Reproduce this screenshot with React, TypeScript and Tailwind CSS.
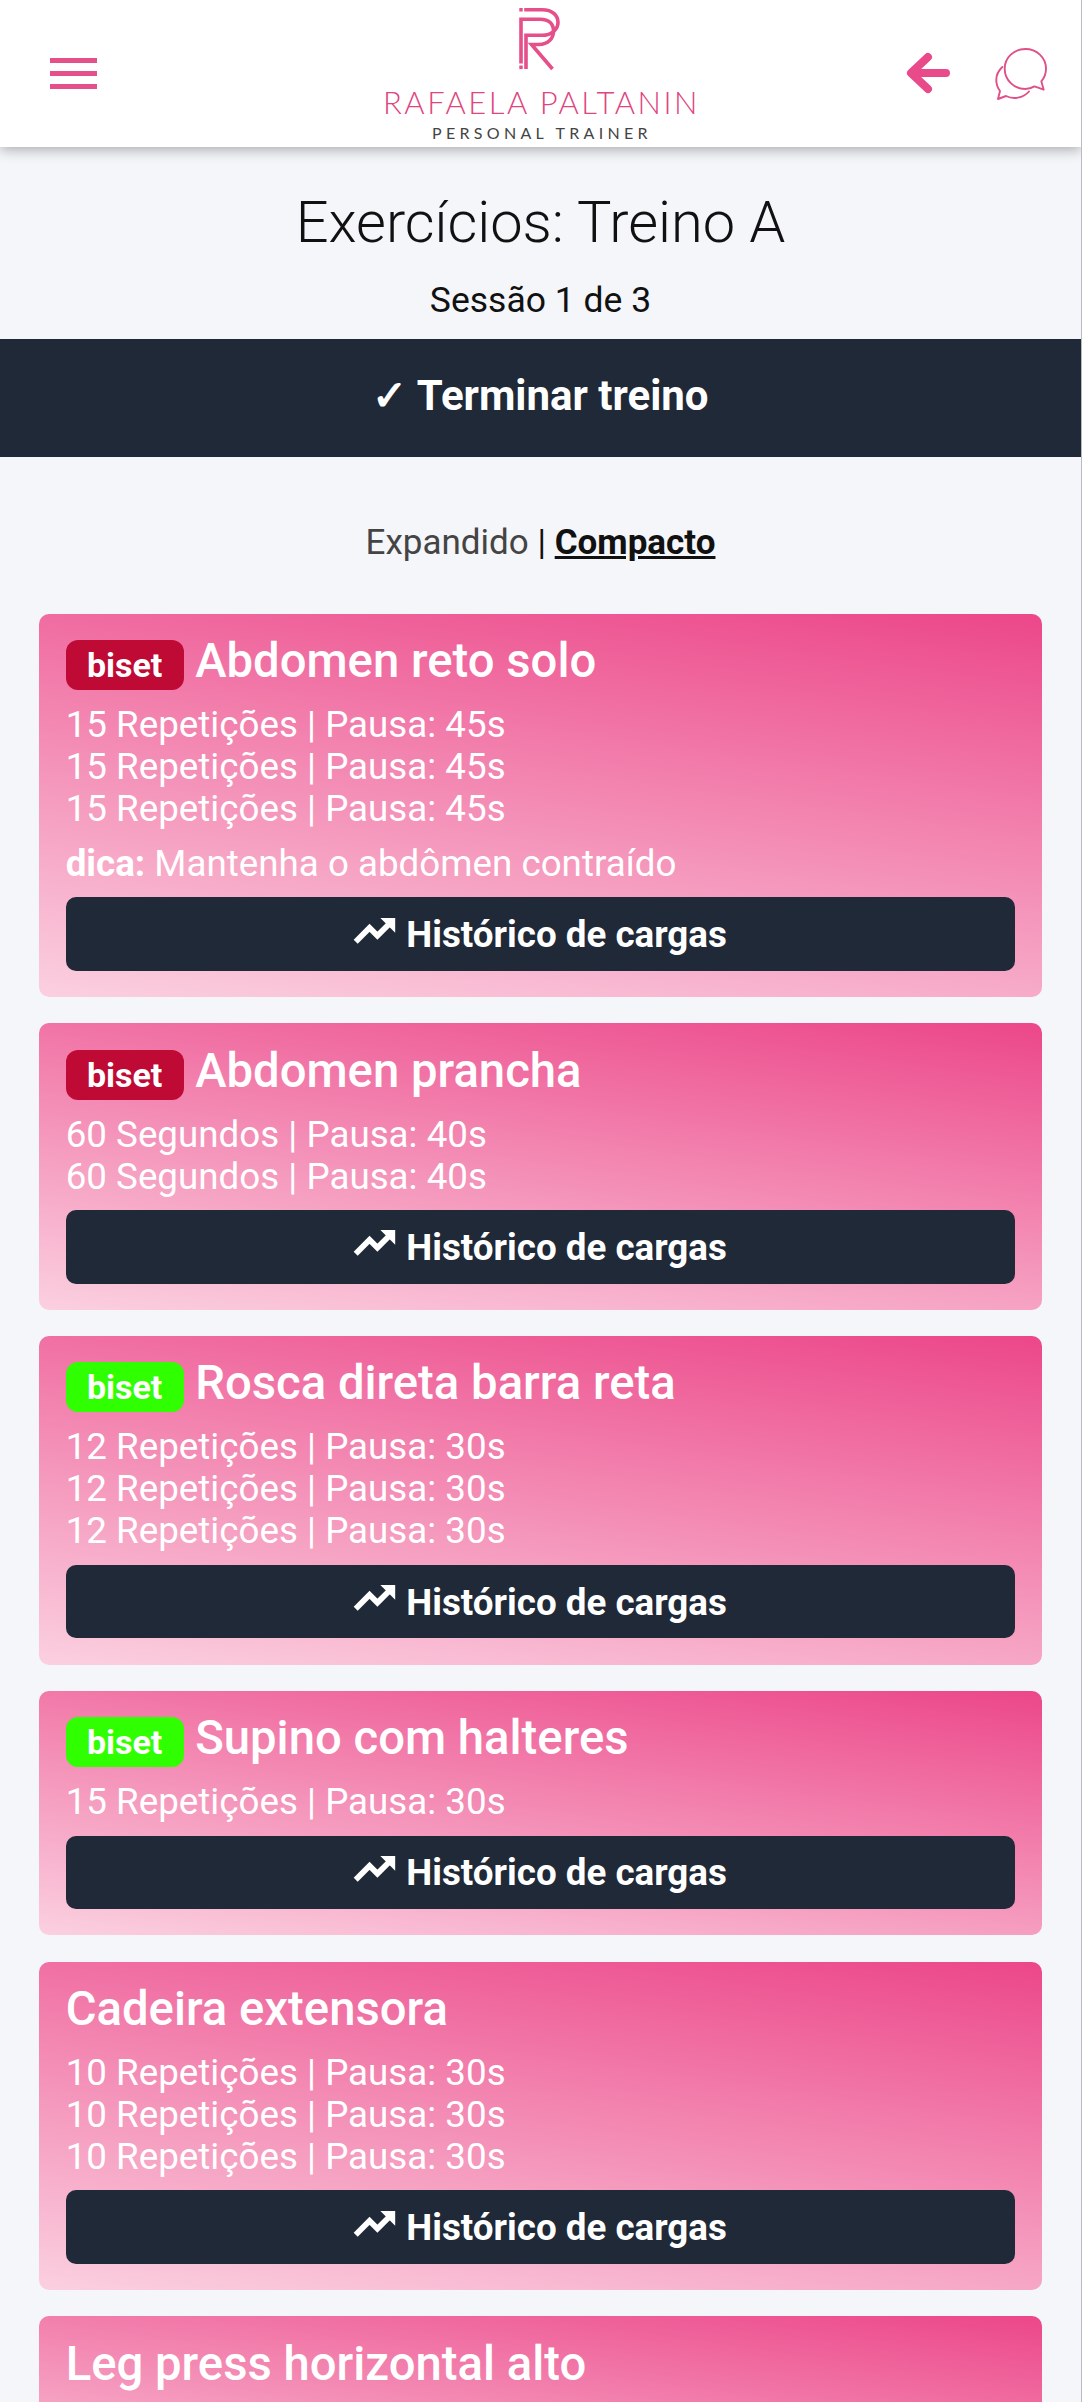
import clsx from "clsx";

interface Exercise {
  name: string;
  sets: string[];
  tag?: "red" | "green";
  tip?: string;
}

const exercises: Exercise[] = [
  {
    name: "Abdomen reto solo",
    tag: "red",
    sets: ["15 Repetições | Pausa: 45s", "15 Repetições | Pausa: 45s", "15 Repetições | Pausa: 45s"],
    tip: "Mantenha o abdômen contraído",
  },
  {
    name: "Abdomen prancha",
    tag: "red",
    sets: ["60 Segundos | Pausa: 40s", "60 Segundos | Pausa: 40s"],
  },
  {
    name: "Rosca direta barra reta",
    tag: "green",
    sets: ["12 Repetições | Pausa: 30s", "12 Repetições | Pausa: 30s", "12 Repetições | Pausa: 30s"],
  },
  {
    name: "Supino com halteres",
    tag: "green",
    sets: ["15 Repetições | Pausa: 30s"],
  },
  {
    name: "Cadeira extensora",
    sets: ["10 Repetições | Pausa: 30s", "10 Repetições | Pausa: 30s", "10 Repetições | Pausa: 30s"],
  },
  {
    name: "Leg press horizontal alto",
    sets: [],
  },
];

const Logo = () => (
  <div className="flex flex-col items-center h-full w-[330px]">
    <svg className="w-[44px] h-[64px] mt-[7px] mr-[3px] shrink-0" viewBox="518 7 44 64" fill="none" stroke="#e54f8a" strokeWidth="3.6">
      <path d="M520.3 9.7h3.4M525.2 9.7H543C554 9.7 559 16 559 22.5C559 29 553 35.3 543 35.3H527V69" />
      <path d="M522 63.5V19.2H541C551 19.2 554.5 25 554.5 31C554.5 38.5 549 44.5 540 44.5H532.5L553.5 69" />
      <path d="M520.3 67.3h3.4" />
    </svg>
    <p className="font-['Lato'] font-light text-[31px] leading-[31px] mt-[16px] pl-[2px] tracking-[2.5px] whitespace-nowrap text-[#e0457f]">
      RAFAELA PALTANIN
    </p>
    <p className="font-['Lato'] text-[16px] leading-[20px] mt-[5px] pl-[3px] tracking-[4.3px] whitespace-nowrap text-[#444]">
      PERSONAL TRAINER
    </p>
  </div>
);

const Header = () => (
  <header className="relative flex shrink-0 justify-between h-[147px] bg-white shadow-[0_3px_12px_rgba(0,0,0,0.3)]">
    <div className="flex flex-col gap-[8px] w-[376px] pl-[50px] pt-[57.5px]">
      <span className="h-[5.2px] w-[47px] bg-[#e54f8a]" />
      <span className="h-[5.2px] w-[47px] bg-[#e54f8a]" />
      <span className="h-[5.2px] w-[47px] bg-[#e54f8a]" />
    </div>
    <Logo />
    <div className="flex w-[376px] justify-end gap-[45px] pr-[33px]">
      <svg className="w-[44px] h-[42px] mt-[52px]" viewBox="0 0 44 42" fill="none" stroke="#e94b8a" strokeWidth="8" strokeLinecap="round" strokeLinejoin="round">
        <path d="M40 21H6M22 5L5 21L22 37" />
      </svg>
      <svg className="w-[53px] h-[54px] mt-[46.5px]" viewBox="0 0 53 54" fill="none" stroke="#e05088" strokeWidth="1.9" strokeLinecap="round" strokeLinejoin="round">
        <path d="M39.500 39.400C36.500 41.200 33.500 42 30.300 42C19 42 9.700 33 9.700 21.700C9.700 10.500 19 2 30.300 2C41.600 2 51 10.500 51 21.700C51 26.500 49.200 31 46.300 34.300L48.700 42.700Z" />
        <path d="M7.300 20C3.500 23.500 1.300 28.500 1.300 33C1.300 37.500 2.700 41 5 44L3 52L11 49C18 52.500 28 51.500 34 44.500" />
      </svg>
    </div>
  </header>
);

const HistoryButton = () => (
  <button className="flex items-center justify-center h-[73.5px] w-full rounded-[10px] bg-[#1f2937] pt-px pr-[3px] text-[36.75px] font-bold cursor-pointer">
    <svg className="w-[47.25px] h-[47.25px] mr-[8px] mb-[9px]" viewBox="0 0 24 24" fill="currentColor" stroke="currentColor" strokeWidth="0.9">
      <path d="M16 6l2.29 2.29-4.88 4.88-4-4L2 16.590 3.410 18l6-6 4 4 6.300-6.290L22 12V6z" />
    </svg>
    Histórico de cargas
  </button>
);

const ExerciseCard = ({ exercise }: { exercise: Exercise }) => (
  <article className="shrink-0 rounded-[10px] p-[26.25px] text-white bg-[linear-gradient(8deg,#fbd0e0,#ec4789)]">
    <div className="flex items-start h-[64px]">
      {exercise.tag && (
        <span
          className={clsx(
            "h-[50px] w-[118px] mr-[11.5px] rounded-[12px] text-center text-[34px] leading-[50px] font-bold",
            exercise.tag === "red" ? "bg-[#be0a35]" : "bg-[#2fff00]"
          )}
        >
          biset
        </span>
      )}
      <h2 className="text-[47.25px] leading-[42px] font-medium">{exercise.name}</h2>
    </div>
    <ul className="text-[36.75px] leading-[42px]">
      {exercise.sets.map((set, i) => (
        <li key={i}>{set}</li>
      ))}
    </ul>
    {exercise.tip && (
      <p className="mt-[13px] text-[36.75px] leading-[42px]">
        <b>dica:</b> {exercise.tip}
      </p>
    )}
    <div className="mt-[12.5px]">
      <HistoryButton />
    </div>
  </article>
);

const App: React.FC = () => {
  return (
    <div className="flex flex-col h-[2402px] w-[1082px] overflow-hidden border-r border-[#b9bac2] bg-[#f4f6fa] font-['Roboto',sans-serif] text-[#111]">
      <Header />
      <h1 className="shrink-0 mt-[42px] text-center text-[57.75px] leading-[66px] font-light">Exercícios: Treino A</h1>
      <p className="shrink-0 mt-[24px] text-center text-[35.5px] leading-[42px]">Sessão 1 de 3</p>
      <button className="flex items-center justify-center shrink-0 mt-[18px] h-[117.5px] w-full bg-[#1f2937] pb-[4px] text-[42px] font-bold text-white cursor-pointer">
        ✓ Terminar treino
      </button>
      <nav className="shrink-0 mt-[65px] text-center text-[35px] leading-[42px]">
        <span className="text-[#444]">Expandido</span> | <b className="underline">Compacto</b>
      </nav>
      <main className="flex flex-col gap-[26.25px] mt-[50.2px] px-[39.4px]">
        {exercises.map((exercise) => (
          <ExerciseCard key={exercise.name} exercise={exercise} />
        ))}
      </main>
    </div>
  );
};

export default App;
